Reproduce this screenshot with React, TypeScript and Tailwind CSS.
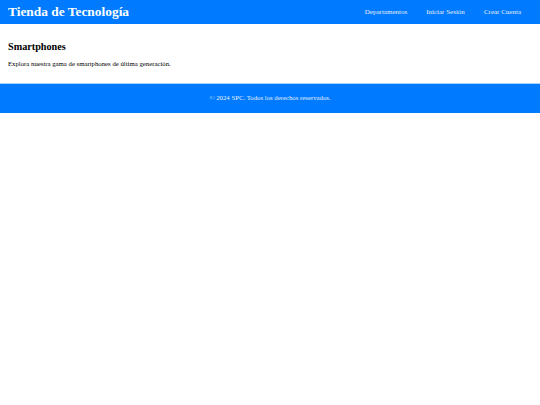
export default function App() {
  return (
    <div className="min-h-[405px] bg-white font-['Liberation_Serif',serif]">
      <header className="flex h-6 items-center justify-between bg-[#007bff] px-2">
        <h1 className="text-[13.4px] font-bold leading-none text-white">Tienda de Tecnología</h1>
        <nav className="flex gap-[19px] pr-[11px] text-[7px] text-[#e8eefc]">
          <a>Departamentos</a>
          <a>Iniciar Sesión</a>
          <a>Crear Cuenta</a>
        </nav>
      </header>
      <main className="px-2 pt-[18px] pb-[15px]">
        <h2 className="text-[10.2px] font-bold leading-none text-black">Smartphones</h2>
        <p className="mt-[9px] text-[6.75px] leading-none text-black">
          Explora nuestra gama de smartphones de última generación.
        </p>
      </main>
      <footer className="flex h-[30px] items-center justify-center border-t border-[#a8d4ff] bg-[#007bff] text-[6.75px] text-[#e8eefc]">
        © 2024 SPC. Todos los derechos reservados.
      </footer>
    </div>
  );
}
